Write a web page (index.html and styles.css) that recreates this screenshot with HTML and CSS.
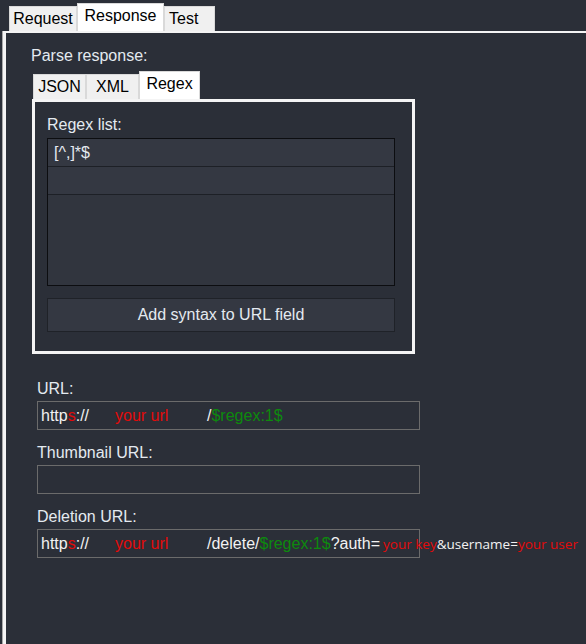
FILE: index.html
```html
<!DOCTYPE html>
<html>
<head>
<meta charset="utf-8">
<link rel="stylesheet" href="styles.css">
</head>
<body>
<div class="tabs">
  <div class="tab t-req">Request</div>
  <div class="tab active t-resp">Response</div>
  <div class="tab t-test">Test</div>
</div>
<div class="panel">
  <div class="label">Parse response:</div>
  <div class="itabs">
    <div class="tab t-json">JSON</div>
    <div class="tab t-xml">XML</div>
    <div class="tab active t-regex">Regex</div>
  </div>
  <div class="inner">
    <div class="label">Regex list:</div>
    <div class="list">
      <div class="row">[^,]*$</div>
      <div class="row"></div>
    </div>
    <div class="button">Add syntax to URL field</div>
  </div>
  <div class="fields">
    <div class="label">URL:</div>
    <div class="input"><span class="proto">http<span class="red">s</span>://</span><span class="host red">your url</span>/<span class="green">$regex:1$</span></div>
    <div class="label gap">Thumbnail URL:</div>
    <div class="input"></div>
    <div class="label gap">Deletion URL:</div>
    <div class="input"><span class="proto">http<span class="red">s</span>://</span><span class="host red">your url</span>/delete/<span class="green">$regex:1$</span>?auth=<span class="alt red key">your key</span><span class="alt">&amp;username=</span><span class="alt red">your user</span></div>
  </div>
</div>
</body>
</html>
```

FILE: styles.css
```css
html, body {
  margin: 0;
  padding: 0;
}
body {
  width: 586px;
  height: 644px;
  overflow: hidden;
  background: #2b2f38;
  font-family: "Liberation Sans", Arial, sans-serif;
  font-size: 16px;
  color: #e4eaf0;
}
.tabs {
  display: flex;
  align-items: flex-end;
  height: 31px;
  padding-left: 9px;
  box-sizing: border-box;
}
.tab {
  height: 25px;
  box-sizing: border-box;
  border: 1px solid #d9d9d9;
  border-bottom: none;
  background: #f0f0f0;
  color: #000;
  display: flex;
  align-items: center;
  justify-content: center;
  line-height: 18px;
}
.tab.active {
  height: 28px;
  background: #fff;
  padding-bottom: 4px;
}
.t-req { width: 68px; }
.t-resp { width: 87px; }
.t-test { width: 51px; justify-content: flex-start; padding-left: 4px; }
.t-json { width: 53px; }
.t-xml { width: 53px; }
.t-regex { width: 61px; height: 28px; }

.panel {
  margin-left: 3px;
  height: 613px;
  box-sizing: border-box;
  border-top: 2px solid #f4f4f4;
  border-left: 3px solid #f4f4f4;
  box-shadow: -1px 0 0 #a9a9a9;
  padding: 14px 0 0 25px;
}
.label {
  line-height: 18px;
  height: 18px;
  white-space: nowrap;
}
.itabs {
  display: flex;
  align-items: flex-end;
  height: 27px;
  margin-top: 7px;
  margin-left: 2px;
}
.inner {
  margin-left: 1px;
  width: 383px;
  box-sizing: border-box;
  border: 3px solid #f4f4f4;
  padding: 14px 17px 19px 12px;
}
.inner .list {
  margin-top: 4px;
}
.list {
  width: 348px;
  height: 148px;
  box-sizing: border-box;
  border: 1px solid #0c0d10;
  background: #31353e;
}
.row {
  height: 28px;
  box-sizing: border-box;
  border-bottom: 1px solid #1d2026;
  background: #343842;
  padding-left: 6px;
  line-height: 28px;
}
.button {
  margin-top: 12px;
  width: 348px;
  height: 34px;
  box-sizing: border-box;
  border: 1px solid #1f2228;
  background: #343842;
  text-align: center;
  line-height: 32px;
}
.fields {
  margin-top: 24px;
  margin-left: 6px;
}
.fields .label {
  padding-top: 2px;
}
.input {
  margin-top: 3px;
  width: 383px;
  height: 29px;
  box-sizing: border-box;
  border: 1px solid #6b6b6b;
  padding-left: 3px;
  line-height: 28px;
  white-space: nowrap;
  overflow: visible;
  color: #f2f2f2;
}
.gap {
  margin-top: 12px;
}
.proto {
  display: inline-block;
  width: 74px;
}
.host {
  display: inline-block;
  width: 92px;
}
.red { color: #e20a0a; }
.green { color: #0d8a0d; }
.alt {
  font-family: "Open Sans", "Noto Sans", sans-serif;
  font-size: 13.5px;
}
.key {
  margin-left: 3px;
}
```
